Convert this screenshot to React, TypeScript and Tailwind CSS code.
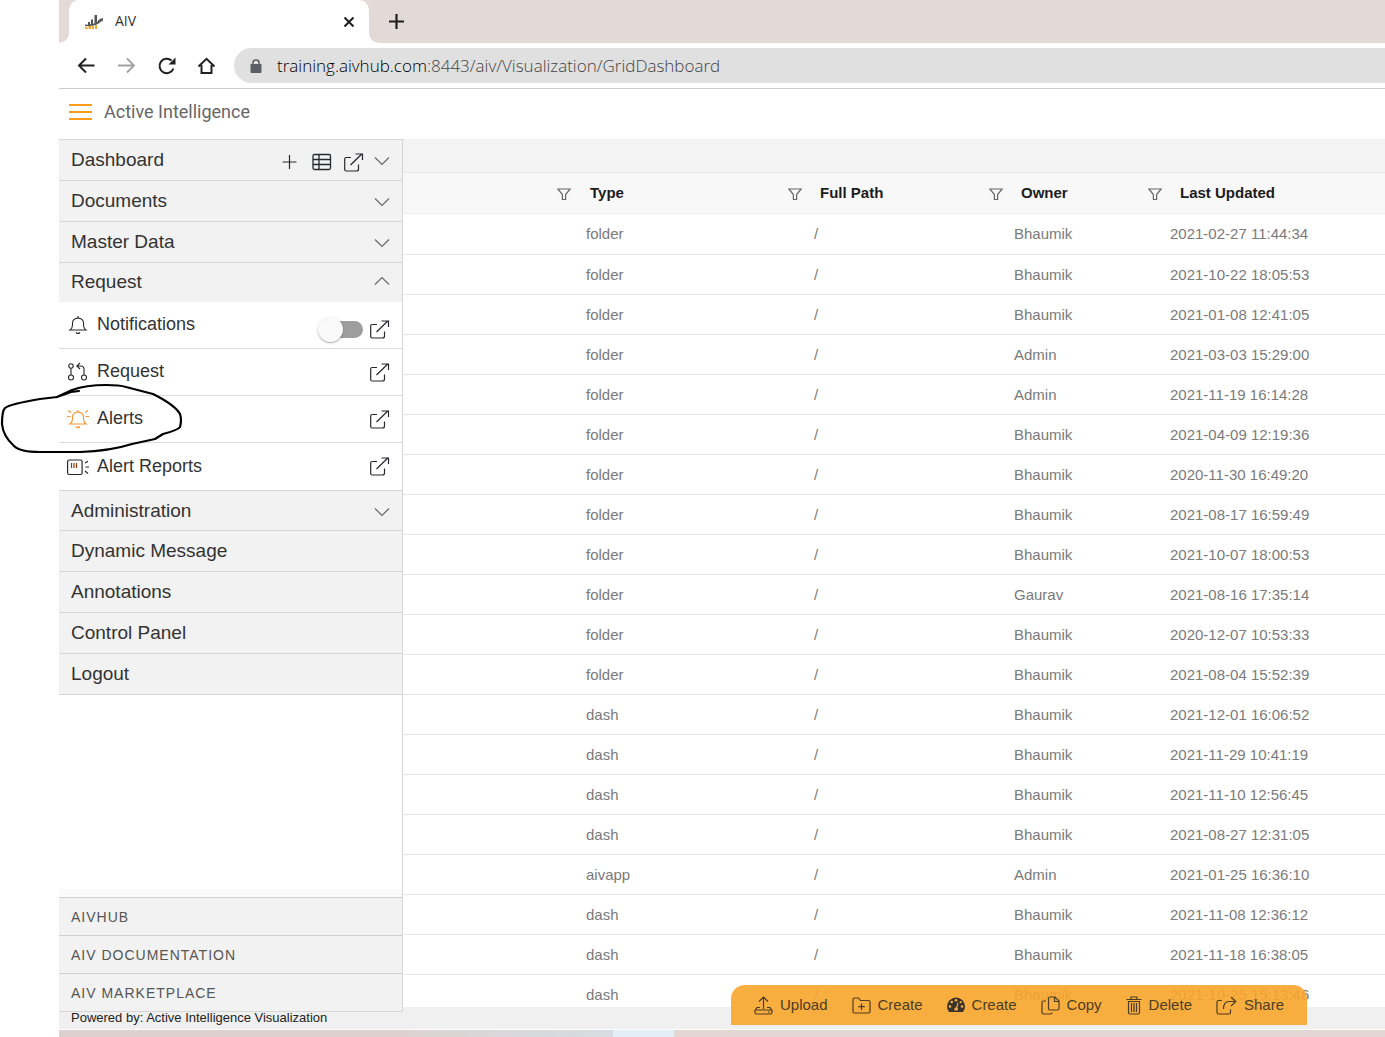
import { useState } from "react";
import type { ReactNode } from "react";

type MenuItem = {
  label: string;
  height: string;
  chevron?: "down" | "up";
  tools?: boolean;
};

type RowData = {
  type: string;
  owner: string;
  updated: string;
};

const topMenu: MenuItem[] = [
  { label: "Dashboard", height: "h-[41px]", chevron: "down", tools: true },
  { label: "Documents", height: "h-[41px]", chevron: "down" },
  { label: "Master Data", height: "h-[41px]", chevron: "down" },
  { label: "Request", height: "h-10", chevron: "up" },
];

const lowerMenu: MenuItem[] = [
  { label: "Administration", height: "h-10", chevron: "down" },
  { label: "Dynamic Message", height: "h-[41px]" },
  { label: "Annotations", height: "h-[41px]" },
  { label: "Control Panel", height: "h-[41px]" },
  { label: "Logout", height: "h-[41px]" },
];

const footerLinks = ["AIVHUB", "AIV DOCUMENTATION", "AIV MARKETPLACE"];

const columns = [
  { label: "", width: "w-[175px]", head: "pr-[7px]", filter: true },
  { label: "Type", width: "w-[228px]", head: "pl-3 pr-1", filter: true },
  { label: "Full Path", width: "w-[200px]", head: "pl-[14px] pr-[3px]", filter: true },
  { label: "Owner", width: "w-[156px]", head: "pl-[15px]", filter: true },
  { label: "Last Updated", width: "", head: "pl-[18px]", filter: false },
];

const rows: RowData[] = [
  { type: "folder", owner: "Bhaumik", updated: "2021-02-27 11:44:34" },
  { type: "folder", owner: "Bhaumik", updated: "2021-10-22 18:05:53" },
  { type: "folder", owner: "Bhaumik", updated: "2021-01-08 12:41:05" },
  { type: "folder", owner: "Admin", updated: "2021-03-03 15:29:00" },
  { type: "folder", owner: "Admin", updated: "2021-11-19 16:14:28" },
  { type: "folder", owner: "Bhaumik", updated: "2021-04-09 12:19:36" },
  { type: "folder", owner: "Bhaumik", updated: "2020-11-30 16:49:20" },
  { type: "folder", owner: "Bhaumik", updated: "2021-08-17 16:59:49" },
  { type: "folder", owner: "Bhaumik", updated: "2021-10-07 18:00:53" },
  { type: "folder", owner: "Gaurav", updated: "2021-08-16 17:35:14" },
  { type: "folder", owner: "Bhaumik", updated: "2020-12-07 10:53:33" },
  { type: "folder", owner: "Bhaumik", updated: "2021-08-04 15:52:39" },
  { type: "dash", owner: "Bhaumik", updated: "2021-12-01 16:06:52" },
  { type: "dash", owner: "Bhaumik", updated: "2021-11-29 10:41:19" },
  { type: "dash", owner: "Bhaumik", updated: "2021-11-10 12:56:45" },
  { type: "dash", owner: "Bhaumik", updated: "2021-08-27 12:31:05" },
  { type: "aivapp", owner: "Admin", updated: "2021-01-25 16:36:10" },
  { type: "dash", owner: "Bhaumik", updated: "2021-11-08 12:36:12" },
  { type: "dash", owner: "Bhaumik", updated: "2021-11-18 16:38:05" },
  { type: "dash", owner: "Bhaumik", updated: "2021-10-25 15:13:46" },
];

function Icon({
  w,
  h,
  stroke = "#26282c",
  width = 1.2,
  children,
}: {
  w: number;
  h: number;
  stroke?: string;
  width?: number;
  children: ReactNode;
}) {
  return (
    <svg
      width={w}
      height={h}
      viewBox={`0 0 ${w} ${h}`}
      fill="none"
      stroke={stroke}
      strokeWidth={width}
      className="shrink-0"
      aria-hidden="true"
    >
      {children}
    </svg>
  );
}

function ExternalIcon() {
  return (
    <Icon w={20} h={19}>
      <path d="M7 4.5H2.200Q0.700 4.500 0.700 6V16.500Q0.700 18 2.200 18H12.500Q14.500 18 14.500 16V11.500" />
      <path d="M6.500 12L17.800 1M11.500 1H18.500V7" />
    </Icon>
  );
}

function Chevron({ up }: { up?: boolean }) {
  return (
    <Icon w={16} h={10} stroke="#6a6a6a">
      <path d={up ? "M1 8.500L8 1.500L15 8.500" : "M1 1.500L8 8.500L15 1.500"} />
    </Icon>
  );
}

function BellShape() {
  return (
    <>
      <path d="M3 15Q5.500 13 5.500 10V7.500Q6 3.500 11 3Q16 3.500 16.500 7.500V10Q16.500 13 19 15Z" />
      <path d="M11 1V3M9 17.500Q11 19.500 13 17.500" />
    </>
  );
}

function BellIcon() {
  return (
    <Icon w={22} h={20} width={1.1}>
      <BellShape />
    </Icon>
  );
}

function AlertIcon() {
  return (
    <Icon w={22} h={20} stroke="#f8963a">
      <BellShape />
      <path d="M0 7.500H3.500M1.200 1.500L4 3.500M22 7.500H18.500M20.800 1.500L18 3.500" />
    </Icon>
  );
}

function RequestIcon() {
  return (
    <Icon w={22} h={20} width={1.1}>
      <circle cx="4" cy="4" r="2.200" />
      <circle cx="4" cy="15.500" r="2.500" />
      <circle cx="17" cy="15.500" r="2.500" />
      <path d="M4 6.200V13M17 13V7.500Q17 4 14 4H10M13 1L9.800 4L13 7" />
    </Icon>
  );
}

function ReportIcon() {
  return (
    <Icon w={22} h={20}>
      <rect x="0.600" y="3" width="14.500" height="14.500" rx="1.500" />
      <path d="M4.500 6V11M7 6V11M9.500 6V11" stroke="#8a3b12" />
      <path d="M18.500 10H22M18 6L21 4.200M18 14L21 16.500" />
    </Icon>
  );
}

function FilterIcon() {
  return (
    <Icon w={14} h={13} stroke="#666">
      <path d="M0.800 1H13.200L8.600 6.500V11.500H5.400V6.500Z" />
    </Icon>
  );
}

function MenuRow({ item }: { item: MenuItem }) {
  const up = item.chevron === "up";
  return (
    <li
      className={`flex items-center border-t border-[#d6d6d6] bg-[#f2f2f2] px-3 ${item.height}`}
    >
      <a
        href="#"
        className={`flex-1 text-[19px] leading-5 text-[#333] ${up ? "pb-[2px]" : ""}`}
      >
        {item.label}
      </a>
      {item.tools && (
        <div className="flex items-center gap-3 pr-[10px] pt-1">
          <button aria-label="Add dashboard">
            <Icon w={16} h={16}>
              <path d="M7.500 1V15M0.500 8H14.500" />
            </Icon>
          </button>
          <button aria-label="Grid view" className="pl-[2px]">
            <Icon w={20} h={18} width={1.300}>
              <rect x="1" y="1.500" width="17.500" height="15" rx="1.500" />
              <path d="M1 6.500H18.500M1 11.500H18.500M7 1.500V16.500" />
            </Icon>
          </button>
          <button aria-label="Open dashboard">
            <ExternalIcon />
          </button>
        </div>
      )}
      {item.chevron && (
        <button
          aria-label={`Toggle ${item.label}`}
          className={up ? "pb-1" : "pt-[2px]"}
        >
          <Chevron up={up} />
        </button>
      )}
    </li>
  );
}

function SubRow({
  icon,
  label,
  last,
  children,
}: {
  icon: ReactNode;
  label: string;
  last?: boolean;
  children?: ReactNode;
}) {
  return (
    <li
      className={`flex h-[47px] items-center border-[#dcdcdc] pl-2 pr-3 ${last ? "" : "border-b"}`}
    >
      {icon}
      <a href="#" className="flex-1 pb-[2px] pl-2 text-lg leading-5 text-[#333]">
        {label}
      </a>
      <div className={`flex items-center gap-[7px] ${children ? "pt-2" : ""}`}>
        {children}
        <button aria-label={`Open ${label}`}>
          <ExternalIcon />
        </button>
      </div>
    </li>
  );
}

function ActionButton({ icon, label }: { icon: ReactNode; label: string }) {
  return (
    <button className="flex items-center gap-[7px] text-[15px] leading-5 text-[#4d3d22]">
      {icon}
      {label}
    </button>
  );
}

function BrowserBar() {
  return (
    <header>
      <div className="flex h-[43px] bg-white">
        <div className="w-[10px] rounded-br-[10px] bg-[#e3dad7]" />
        <div className="w-[300px] bg-[#e3dad7]">
          <div className="flex h-full items-center rounded-t-[10px] bg-white pl-4 pr-[14px]">
            <Icon w={18} h={16} stroke="none">
              <path d="M0 13H2.500V15H0ZM3.500 12H6V15H3.500ZM7 12H9V15H7ZM10 11H12V15H10Z" fill="#f7a52c" />
              <path d="M3 8H5V11H3ZM6 5.500H8V10.500H6ZM9.500 1H12V9H9.500ZM13 6H14V8H13Z" fill="#555" />
              <path d="M0 10.500Q4 11 9 9.500Q13 8 15 5.800L13.500 5.200L18 4L17.500 8L16.500 7Q12 13 0 12Z" fill="#555" />
            </Icon>
            <span className="flex-1 pb-[2px] pl-3 font-['Open_Sans'] text-sm text-[#333]">AIV</span>
            <button aria-label="Close tab">
              <Icon w={12} h={12} stroke="#1f1f1f" width={2}>
                <path d="M1.500 1.500L10.500 10.500M10.500 1.500L1.500 10.500" />
              </Icon>
            </button>
          </div>
        </div>
        <div className="flex flex-1 items-center rounded-bl-[10px] bg-[#e3dad7] pl-5">
          <button aria-label="New tab">
            <Icon w={16} h={16} stroke="#1f1f1f" width={2.200}>
              <path d="M7.500 0V15M0 7.500H15" />
            </Icon>
          </button>
        </div>
      </div>
      <div className="flex h-[46px] items-center border-b border-[#cbcbcb] bg-white pl-[18px]">
        <div className="flex items-center gap-5">
          <button aria-label="Back">
            <Icon w={20} h={18} stroke="#222" width={2}>
              <path d="M17.500 8.500H2M9 1.500L2 8.500L9 15.500" />
            </Icon>
          </button>
          <button aria-label="Forward">
            <Icon w={20} h={18} stroke="#a2a2a2" width={1.800}>
              <path d="M1 8.500H17M10 1.500L17 8.500L10 15.500" />
            </Icon>
          </button>
          <button aria-label="Reload">
            <Icon w={20} h={18} stroke="#222" width={2}>
              <path d="M16.500 11.500A7.200 7.200 0 1 1 14.500 3.500" />
              <path d="M18.500 0.500V7.500H11.500Z" fill="#222" stroke="none" />
            </Icon>
          </button>
          <button aria-label="Home">
            <Icon w={20} h={18} stroke="#222" width={2}>
              <path d="M1.500 9.500L9.500 1.800L17.500 9.500M4.500 8V16H14.500V8" />
            </Icon>
          </button>
        </div>
        <div className="ml-[17px] flex h-[35px] flex-1 items-center rounded-l-full bg-[#e0e0e0] pl-4">
          <svg width="12" height="14" viewBox="0 0 12 14" aria-hidden="true">
            <rect x="0.500" y="5" width="11" height="9" rx="1" fill="#5b5e63" />
            <path d="M3 6V3.500Q3 1 6 1Q9 1 9 3.500V6" fill="none" stroke="#5b5e63" strokeWidth="1.500" />
          </svg>
          <div
            role="textbox"
            aria-label="Address"
            tabIndex={0}
            className="pl-[15px] font-['Open_Sans'] text-[17px] leading-6 font-light whitespace-nowrap text-[#444]"
          >
            <span className="text-black">training.aivhub.com</span>
            :8443/aiv/Visualization/GridDashboard
          </div>
        </div>
      </div>
    </header>
  );
}

function Sidebar() {
  const [notify, setNotify] = useState(false);

  return (
    <aside className="flex w-[344px] shrink-0 flex-col border-r border-b border-[#d6d6d6] bg-white">
      <nav>
        <ul>
          {topMenu.map((item) => (
            <MenuRow key={item.label} item={item} />
          ))}
        </ul>
        <ul>
          <SubRow icon={<BellIcon />} label="Notifications">
            <input
              type="checkbox"
              role="switch"
              aria-label="Notifications"
              checked={notify}
              onChange={(e) => setNotify(e.target.checked)}
              className="relative h-[25px] w-[45px] appearance-none before:absolute before:top-1 before:right-0 before:h-[17px] before:w-[34px] before:rounded-full before:bg-[#9e9e9e] after:absolute after:top-0 after:left-0 after:size-[25px] after:rounded-full after:bg-[#fafafa] after:shadow-[0_1px_2px_rgba(0,0,0,0.35)] checked:after:left-5"
            />
          </SubRow>
          <SubRow icon={<RequestIcon />} label="Request" />
          <SubRow icon={<AlertIcon />} label="Alerts" />
          <SubRow icon={<ReportIcon />} label="Alert Reports" last />
        </ul>
        <ul className="border-b border-[#d6d6d6]">
          {lowerMenu.map((item) => (
            <MenuRow key={item.label} item={item} />
          ))}
        </ul>
      </nav>
      <ul className="mt-auto border-t-8 border-[#fafafa]">
        {footerLinks.map((label) => (
          <li
            key={label}
            className="flex h-[38px] items-center border-t border-[#d0d0d0] bg-[#f2f2f2] pl-3"
          >
            <a href="#" className="text-sm tracking-[1px] text-[#555]">
              {label}
            </a>
          </li>
        ))}
      </ul>
    </aside>
  );
}

function DashboardTable() {
  return (
    <table className="w-full table-fixed border-separate border-spacing-0 text-left text-[15px] leading-5">
      <thead>
        <tr className="h-[41px] bg-[#f8f8f8]">
          {columns.map((col) => (
            <th
              key={col.label}
              className={`border-b border-[#efefef] p-0 font-bold text-[#1c1c1c] ${col.width} ${col.head}`}
            >
              <div className="flex items-center justify-between">
                <span>{col.label}</span>
                {col.filter && (
                  <button aria-label={`Filter ${col.label}`} className="pt-[3px]">
                    <FilterIcon />
                  </button>
                )}
              </div>
            </th>
          ))}
        </tr>
      </thead>
      <tbody className="text-[#7a7a7a]">
        {rows.map((row) => (
          <tr key={row.updated} className="h-10 first:h-[41px]">
            <td className="border-b border-[#e6e6e6] p-0" />
            <td className="border-b border-[#e6e6e6] p-0 pl-2">{row.type}</td>
            <td className="border-b border-[#e6e6e6] p-0 pl-2">/</td>
            <td className="border-b border-[#e6e6e6] p-0 pl-2">{row.owner}</td>
            <td className="border-b border-[#e6e6e6] p-0 pl-2">{row.updated}</td>
          </tr>
        ))}
      </tbody>
    </table>
  );
}

function ActionBar() {
  const ink = "#4d3d22";
  return (
    <div className="absolute right-[78px] bottom-3 flex h-10 items-center gap-6 rounded-t-[14px] bg-[#f8a52b]/90 px-[23px]">
      <ActionButton
        label="Upload"
        icon={
          <Icon w={19} h={19} stroke={ink}>
            <path d="M9.500 13V1.500M5 5.500L9.500 1L14 5.500M6 11.500H3L1 14.500V16.500Q1 18 2.500 18H16.500Q18 18 18 16.500V14.500L16 11.500H13M1 14H18M14 16H16" />
          </Icon>
        }
      />
      <ActionButton
        label="Create"
        icon={
          <Icon w={19} h={17} stroke={ink}>
            <path d="M1 2.500Q1 1 2.500 1H6.500L8.500 3.500H16.500Q18 3.500 18 5V14.500Q18 16 16.500 16H2.500Q1 16 1 14.500ZM9.500 6.500V13M6.200 9.700H12.800" />
          </Icon>
        }
      />
      <ActionButton
        label="Create"
        icon={
          <Icon w={18} h={16} stroke="none">
            <path d="M2 15Q0 12.500 0 9.500A9 9 0 0 1 18 9.500Q18 12.500 16 15Z" fill="#3a332a" />
            <g fill="#f9ae40">
              <circle cx="3" cy="9.500" r="1.300" />
              <circle cx="4.800" cy="5" r="1.300" />
              <circle cx="9" cy="3.200" r="1.300" />
              <circle cx="15" cy="9.500" r="1.300" />
              <circle cx="13.700" cy="5.200" r="1.100" />
              <path d="M10.500 5.500L11.500 5.800L10.400 10.500Q11.500 12 10.500 13.500H7.500Q6.500 11 9.200 10.200Z" />
            </g>
          </Icon>
        }
      />
      <ActionButton
        label="Copy"
        icon={
          <Icon w={19} h={19} stroke={ink}>
            <path d="M7.500 2.500Q7.500 1 9 1H14L18 5V12.500Q18 14 16.500 14H9Q7.500 14 7.500 12.500ZM13.500 1V5.500H18M5 5H2.500Q1 5 1 6.500V16.500Q1 18 2.500 18H9.500Q11 18 11 16.500" />
          </Icon>
        }
      />
      <ActionButton
        label="Delete"
        icon={
          <Icon w={16} h={19} stroke={ink}>
            <path d="M0.500 3.500H15.500M5 3V1H11V3M2 5.500H14M2.500 5.500V16.500Q2.500 18 4 18H12Q13.500 18 13.500 16.500V5.500M5.500 7V16M8 7V16M10.500 7V16" />
          </Icon>
        }
      />
      <ActionButton
        label="Share"
        icon={
          <Icon w={21} h={19} stroke={ink}>
            <path d="M6 4.500H2.500Q1 4.500 1 6V16.500Q1 18 2.500 18H13Q14.500 18 14.500 16.500V13.500M7.500 13Q7.500 5.500 13 5.500H19.500M15 1L19.800 5.500L15 10" />
          </Icon>
        }
      />
    </div>
  );
}

export default function App() {
  return (
    <div className="relative flex h-screen flex-col overflow-hidden bg-white pl-[59px] font-['Liberation_Sans',Arial,sans-serif]">
      <BrowserBar />

      <div className="flex h-[50px] shrink-0 items-center gap-3 pl-[10px] pb-1">
        <button aria-label="Menu">
          <Icon w={23} h={16} stroke="#fb9d1c" width={2}>
            <path d="M0 1H23M0 8H23M0 15H23" />
          </Icon>
        </button>
        <h1 className="font-['Roboto',sans-serif] text-lg leading-6 text-[#666]">
          Active Intelligence
        </h1>
      </div>

      <div className="flex min-h-0 flex-1">
        <Sidebar />
        <main className="flex min-w-0 flex-1 flex-col bg-[#f0f0f0]">
          <div className="h-[34px] shrink-0 border-b border-[#e6e6e6] bg-[#f3f3f3]" />
          <div className="mb-[5px] min-h-0 flex-1 overflow-hidden bg-white">
            <DashboardTable />
          </div>
        </main>
      </div>

      <footer className="h-[17px] shrink-0 bg-[#f0f0f0] pl-3 text-[13px] leading-3 text-[#222]">
        Powered by: Active Intelligence Visualization
      </footer>
      <div className="mt-px flex h-[7px] shrink-0 bg-[#e3d7d3]">
        <div className="w-[554px] bg-linear-to-r from-[#ddd1cf] from-60% to-[#d5dde3]" />
        <div className="w-[61px] bg-[#e2eff7]" />
      </div>

      <ActionBar />

      {/* pen mark around the Alerts entry */}
      <svg
        width="190"
        height="80"
        viewBox="0 0 190 80"
        fill="none"
        stroke="#000"
        strokeWidth="2.200"
        strokeLinecap="round"
        strokeLinejoin="round"
        className="pointer-events-none absolute top-[380px] left-0"
        aria-hidden="true"
      >
        <path d="M79 11L71 12L57 17L72 10Q86 5 106 5Q120 5 126 7L153 14Q175 25 180 34Q182 40 180 47Q178 50 163 54L155 59L132 64Q110 71 80 72H40Q20 72 14 66Q3 56 2 44Q2 31 5 28Q10 24 40 19L57 17" />
      </svg>
    </div>
  );
}
